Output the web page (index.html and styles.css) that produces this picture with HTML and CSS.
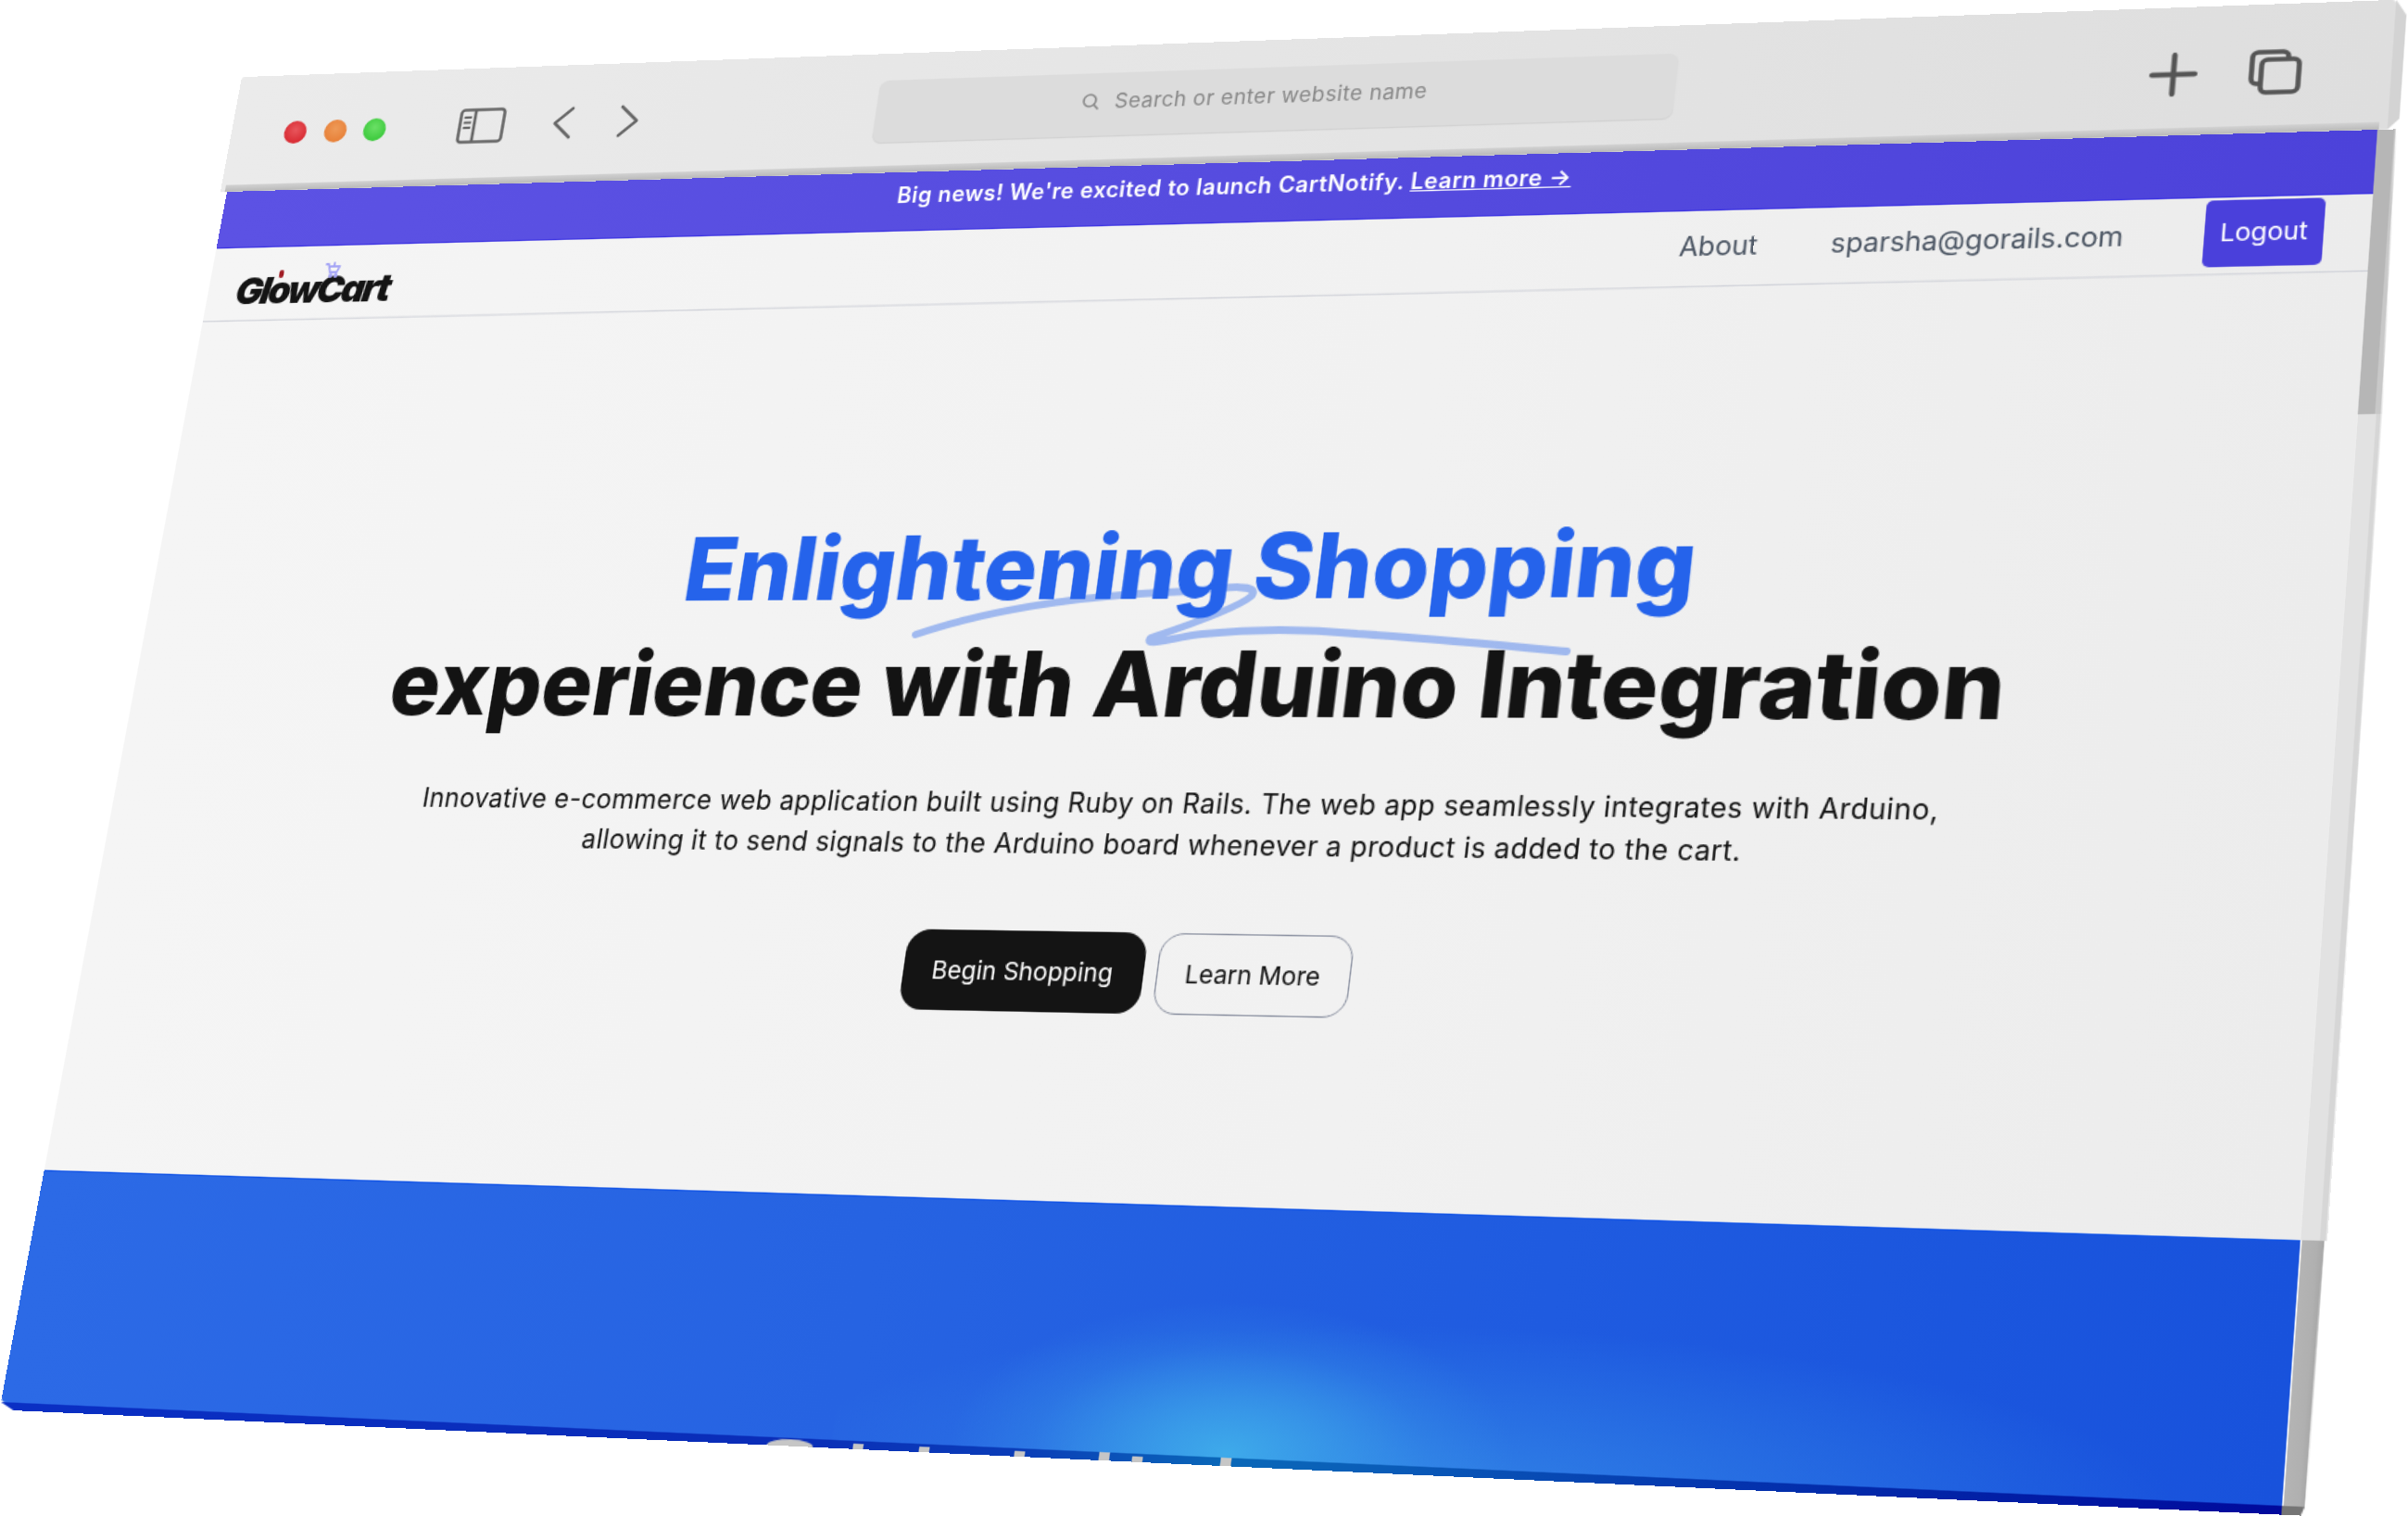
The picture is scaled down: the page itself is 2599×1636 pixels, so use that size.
FILE: index.html
```html
<!DOCTYPE html>
<html lang="en">
<head>
<meta charset="utf-8">
<title>GlowCart</title>
<link rel="stylesheet" href="styles.css">
</head>
<body>
<div class="window">
  <div class="toolbar-row">
    <header class="toolbar">
      <div class="tool-row">
        <span class="dot dot-red"></span>
        <span class="dot dot-orange"></span>
        <span class="dot dot-green"></span>
        <svg class="ico-sidebar" viewBox="0 0 41 31" fill="none" stroke="#666" stroke-width="2.6" stroke-linejoin="round"><rect x="1.5" y="1.5" width="38" height="28" rx="3"/><path d="M14 2v27"/><path d="M4.5 8h6.5M4.5 12.5h6.5M4.5 17h6.5" stroke-width="2.2"/></svg>
        <svg class="ico-back" viewBox="0 0 18 29" fill="none" stroke="#666" stroke-width="2.6" stroke-linecap="round" stroke-linejoin="round"><path d="M16 2 2 14.5 16 27"/></svg>
        <svg class="ico-forward" viewBox="0 0 18 29" fill="none" stroke="#666" stroke-width="2.6" stroke-linecap="round" stroke-linejoin="round"><path d="M2 2l14 12.5L2 27"/></svg>
        <div class="address">
          <svg class="ico-search" viewBox="0 0 16 16" fill="none" stroke="#888" stroke-width="1.6" stroke-linecap="round"><circle cx="7" cy="7" r="5"/><path d="M10.8 10.8 14 14"/></svg>
          <span class="address-text">Search or enter website name</span>
        </div>
        <svg class="ico-plus" viewBox="0 0 35 35" fill="none" stroke="#555" stroke-width="4" stroke-linecap="round"><path d="M17.5 2v31M2 17.5h31"/></svg>
        <svg class="ico-tabs" viewBox="0 0 40 36" fill="none" stroke="#555" stroke-width="3.6" stroke-linejoin="round"><path d="M9 27H7a4 4 0 0 1-4-4V6a4 4 0 0 1 4-4h18a4 4 0 0 1 4 4v2"/><rect x="10" y="8" width="27" height="26" rx="4"/></svg>
      </div>
      <div class="toolbar-bevel"></div>
    </header>
    <div class="toolbar-side"></div>
  </div>

  <div class="page-row">
    <main class="page">
      <div class="banner">Big news! We're excited to launch CartNotify. <a class="banner-link">Learn more →</a></div>
      <nav class="nav">
        <div class="logo">GlowCart
          <span class="logo-bulb"></span>
          <svg class="logo-cart" viewBox="0 0 14 14" fill="none" stroke="#a5a5f5" stroke-width="1.8" stroke-linecap="round" stroke-linejoin="round"><path d="M1 2h2l2 7h6l2-5H4"/><circle cx="6" cy="12" r="1"/><circle cx="10.5" cy="12" r="1"/><path d="M8 1v3"/></svg>
        </div>
        <div class="nav-links">
          <a class="nav-link nav-about">About</a>
          <a class="nav-link nav-email">sparsha@gorails.com</a>
          <button class="logout">Logout</button>
        </div>
      </nav>
      <section class="hero">
        <h1 class="headline">
          <span class="headline-blue">Enlightening Shopping</span>
          <span class="headline-dark">experience with Arduino Integration</span>
          <svg class="squiggle" viewBox="0 0 560 70" fill="none"><path d="M2 52C70 28 150 20 218 18 245 15 270 12 265 22 255 32 210 48 190 55 185 63 210 54 230 52 270 48 310 48 350 52 410 56 470 62 511 66" stroke="#2563eb" stroke-opacity=".4" stroke-width="6" stroke-linecap="round" stroke-linejoin="round"/></svg>
        </h1>
        <p class="lead">Innovative e-commerce web application built using Ruby on Rails. The web app seamlessly integrates with Arduino,<br>allowing it to send signals to the Arduino board whenever a product is added to the cart.</p>
        <div class="actions">
          <a class="btn btn-primary">Begin Shopping</a>
          <a class="btn btn-outline">Learn More</a>
        </div>
      </section>
      <section class="cta"></section>
    </main>
    <div class="side">
      <div class="side-thumb"></div>
      <div class="side-track"></div>
      <div class="side-low"></div>
    </div>
  </div>

  <div class="base">
    <div class="base-front">
      <span class="peek peek-round"></span><span class="peek"></span><span class="peek"></span><span class="peek"></span><span class="peek"></span><span class="peek"></span><span class="peek"></span>
    </div>
    <div class="base-side"></div>
  </div>
</div>
</body>
</html>
```
FILE: styles.css
```css
* { box-sizing: border-box; }
html, body { margin: 0; padding: 0; background: #fff; }
body {
  width: 2599px;
  height: 1636px;
  overflow: hidden;
  font-family: "Inter", "Liberation Sans", sans-serif;
}

.window {
  width: 1750px;
  transform-origin: 0 0;
  transform: matrix3d(
    1.176581, -0.048384, 0, -0.00006736,
    -0.24406, 1.21202, 0, -0.000062117,
    0, 0, 1, 0,
    245, 207, 0, 1
  ) translate(-6px, -102px);
}

/* toolbar */
.toolbar-row { display: flex; height: 102px; }
.toolbar {
  width: 1733px;
  background: linear-gradient(90deg, #ebebeb 0%, #e5e5e5 50%, #dedede 100%);
  border-radius: 3px 3px 0 0;
  display: flex;
  flex-direction: column;
}
.toolbar-side {
  width: 8px;
  background: #d3d3d3;
  clip-path: polygon(0 0, 100% 12%, 100% 92%, 0 100%);
}
.tool-row {
  height: 96px;
  padding: 5px 0 0 48px;
  display: flex;
  align-items: center;
}
.toolbar-bevel {
  height: 6px;
  margin: 0 6px 0 4px;
  background: linear-gradient(180deg, #d2d2d2, #b8b8b8);
}
.dot {
  width: 20px;
  height: 20px;
  border-radius: 50%;
  margin-right: 15.5px;
  flex: none;
}
.dot-red { background: radial-gradient(circle at 50% 40%, #e8565c, #d92c34 70%); }
.dot-orange { background: radial-gradient(circle at 50% 40%, #ee9a58, #e8823a 70%); }
.dot-green { background: radial-gradient(circle at 50% 40%, #6be066, #3fcb3f 70%); }
.ico-sidebar { width: 41px; height: 31px; margin-left: 48px; flex: none; }
.ico-back { width: 18px; height: 29px; margin-left: 42px; flex: none; }
.ico-forward { width: 18px; height: 29px; margin-left: 39px; flex: none; }
.address {
  width: 642px;
  height: 53px;
  margin: 0 0 3px 202px;
  padding: 0 0 5px 170px;
  background: #dcdcdc;
  border-radius: 8px;
  box-shadow: 0 1px 1px #d0d0d0;
  display: flex;
  align-items: center;
  flex: none;
}
.ico-search { width: 16px; height: 16px; flex: none; }
.address-text {
  margin-left: 12px;
  font-size: 17px;
  color: #868686;
  white-space: nowrap;
  letter-spacing: 0.38px;
}
.ico-plus { width: 35px; height: 35px; margin: 6px 0 0 354px; flex: none; }
.ico-tabs { width: 40px; height: 36px; margin: 6px 0 0 36px; flex: none; }

/* page */
.page-row { display: flex; margin-left: 6px; }
.page {
  width: 1720px;
  height: 1000px;
  display: flex;
  flex-direction: column;
  background: linear-gradient(90deg, #f5f5f5 0%, #f1f1f1 60%, #ececec 100%);
  border-radius: 0 0 0 4px;
  overflow: hidden;
}
.banner {
  height: 50px;
  padding: 9px 8px 0 0;
  flex: none;
  text-align: center;
  color: #fff;
  font-size: 18px;
  line-height: 22px;
  font-weight: 600;
  letter-spacing: 0.4px;
  background: linear-gradient(90deg, #5c52e4 0%, #564cdf 50%, #4c42da 100%);
  border-bottom: 1px solid #3c33e2;
}
.banner-link { text-decoration: underline; }

.nav {
  position: relative;
  height: 64px;
  flex: none;
  padding: 2px 33px 0 25px;
  display: flex;
  justify-content: space-between;
  align-items: flex-start;
}
.nav::after {
  content: "";
  position: absolute;
  left: 0;
  right: 0;
  bottom: 0;
  height: 1px;
  background: #cfd1d8;
  transform-origin: 0 50%;
  transform: rotate(-0.133deg);
}
.logo {
  position: relative;
  margin-top: 20px;
  font-size: 32px;
  line-height: 32px;
  font-weight: 900;
  font-style: italic;
  letter-spacing: -2.2px;
  color: #141414;
}
.logo-bulb {
  position: absolute;
  left: 36px;
  top: -2px;
  width: 4px;
  height: 7px;
  border-radius: 2px;
  background: #a01c24;
}
.logo-cart {
  position: absolute;
  left: 76px;
  top: -8px;
  width: 14px;
  height: 14px;
}
.nav-links { display: flex; align-items: flex-start; }
.nav-link {
  font-size: 21px;
  line-height: 24px;
  color: #4b5563;
  white-space: nowrap;
  margin-top: 15px;
}
.nav-about { margin-right: 55px; }
.logout {
  width: 85px;
  height: 52px;
  margin-left: 58px;
  padding: 0;
  border: 0;
  border-radius: 5px;
  background: #4a40db;
  color: #fff;
  font: 400 19px/24px "Inter", "Liberation Sans", sans-serif;
}

.hero {
  height: 704px;
  flex: none;
  padding-top: 168px;
  display: flex;
  flex-direction: column;
  align-items: center;
}
.headline {
  position: relative;
  margin: 0 10px 0 0;
  font-size: 71px;
  line-height: 93px;
  font-weight: 800;
  text-align: center;
  white-space: nowrap;
}
.headline-blue { display: block; color: #2563eb; letter-spacing: 0; }
.headline-dark { display: block; color: #131313; letter-spacing: 0; }
.squiggle {
  position: absolute;
  left: 429px;
  top: 48px;
  width: 560px;
  height: 70px;
  overflow: visible;
}
.lead {
  margin: 31px 6px 0 0;
  font-size: 21px;
  line-height: 32px;
  font-weight: 400;
  text-align: center;
  color: #111;
  white-space: nowrap;
  letter-spacing: 0.32px;
}
.actions { display: flex; gap: 10px; margin: 51px 9px 0 0; }
.btn {
  height: 62px;
  display: flex;
  align-items: center;
  justify-content: center;
  border-radius: 18px;
  font-size: 19px;
  white-space: nowrap;
}
.btn-primary { width: 188px; background: #141414; color: #fff; }
.btn-outline { width: 148px; border: 1px solid #8a90a0; color: #111; }

.cta {
  flex: 1;
  border-top: 1px solid #0f52e6;
  background:
    radial-gradient(ellipse 210px 110px at 300px 178px, rgba(62, 170, 234, 1) 0%, rgba(62, 170, 234, .6) 35%, rgba(62, 170, 234, .18) 70%, rgba(62, 170, 234, 0) 100%),
    radial-gradient(ellipse 500px 110px at 470px 190px, rgba(62, 160, 234, .5) 0%, rgba(62, 160, 234, 0) 100%),
    linear-gradient(90deg, #2c6ae6 0%, #2663e2 40%, #1f5be0 70%, #1852dc 100%);
  background-position: 680px 0, 680px 0, 0 0;
  background-repeat: no-repeat;
  background-size: 1040px 182px, 1040px 182px, 100% 100%;
}

/* right wall */
.side { width: 18px; display: flex; flex-direction: column; flex: none; }
.side-thumb {
  height: 219px;
  background: linear-gradient(90deg, #b6b6b6 0, #b6b6b6 65%, #c8c8c8 65%);
  clip-path: polygon(0 0, 13px 0, 16.5px 100%, 0 100%);
}
.side-track {
  height: 599px;
  background: linear-gradient(90deg, #e2e2e2 0, #e2e2e2 70%, #d6d6d6 70%);
  clip-path: polygon(0 0, 16.5px 0, 17.5px 100%, 0 100%);
}
.side-low {
  height: 182px;
  border-left: 1px solid #fff;
  background: linear-gradient(90deg, #b4b4b4 0, #b0b0b0 60%, #a2a2a2 100%);
  clip-path: polygon(0 0, 16px 0, 15px 100%, 0 100%);
}

/* bottom wall */
.base { display: flex; height: 6px; margin-left: 6px; }
.base-front {
  width: 1720px;
  padding-left: 630px;
  display: flex;
  align-items: flex-end;
  background: linear-gradient(90deg, #0a2fc4 0%, #0a2db8 37%, #0a3db8 48%, #0a68b8 57%, #0a5cb8 64%, #0434ae 78%, #00099c 100%);
  clip-path: polygon(0 0, 100% 0, 100% 100%, 12px 100%);
}
.base-side {
  width: 15px;
  background: #757575;
  clip-path: polygon(0 0, 100% 0, 85% 100%, 0 100%);
}
.peek { width: 8px; height: 4px; background: #c6c6c6; flex: none; }
.peek-round { width: 36px; height: 5px; border-radius: 18px 18px 0 0 / 5px 5px 0 0; }
.peek:nth-child(2) { margin-left: 31px; }
.peek:nth-child(3) { margin-left: 43px; }
.peek:nth-child(4) { margin-left: 65px; }
.peek:nth-child(5) { margin-left: 56px; height: 6px; }
.peek:nth-child(6) { margin-left: 17px; }
.peek:nth-child(7) { margin-left: 58px; height: 6px; }
```
